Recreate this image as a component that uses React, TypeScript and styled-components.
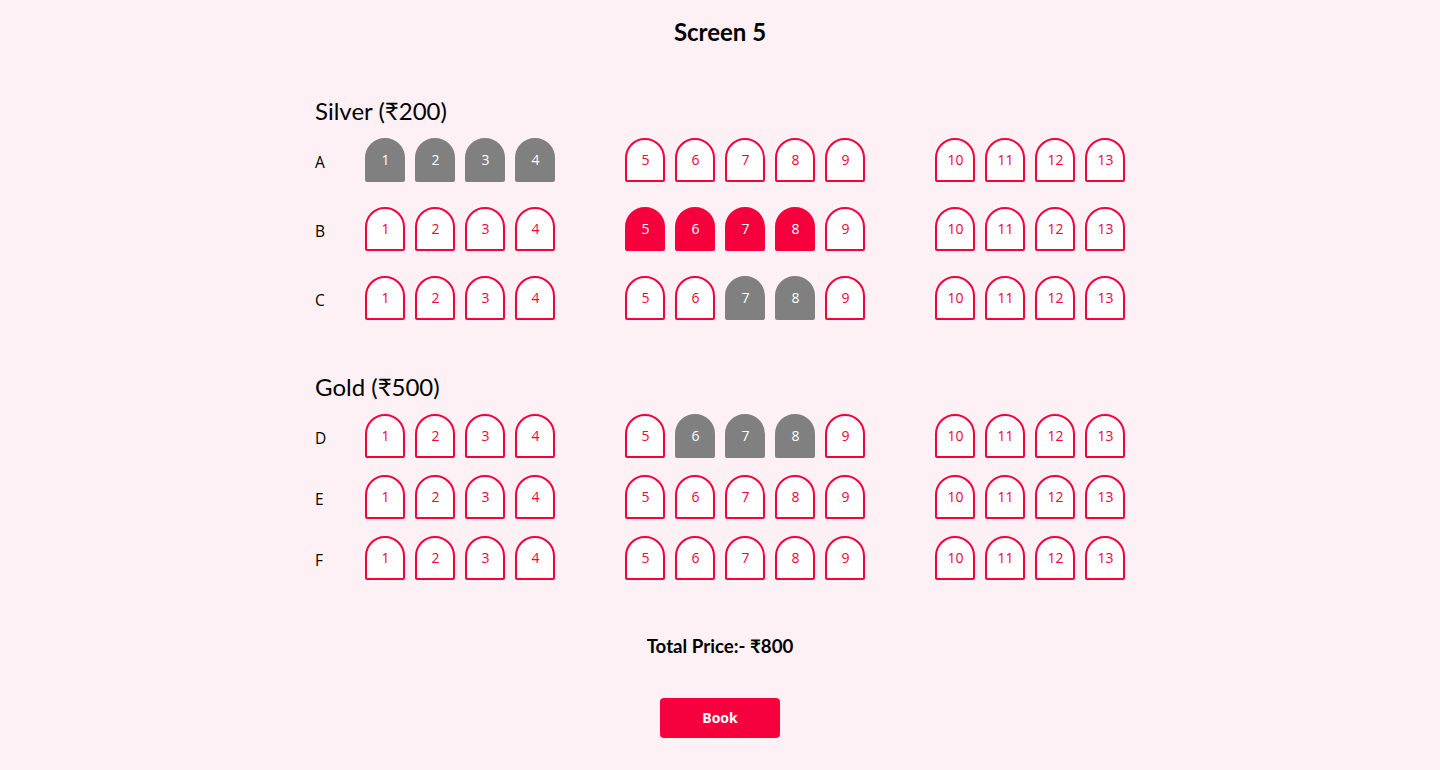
import React from "react";
import styled, { createGlobalStyle } from "styled-components";

const Global = createGlobalStyle`
  html, body { margin: 0; padding: 0; background: #fdf1f5; }
  body { font-family: "Open Sans", "Noto Sans", sans-serif; color: #000; }
`;

const RED = "#f5003c";
const GREY = "#808080";

const Page = styled.div`
  min-height: 100vh;
  background: #fdf1f5;
  display: flex;
  flex-direction: column;
  align-items: center;
  padding-top: 17px;
  box-sizing: border-box;
`;

const Title = styled.h1`
  margin: 0;
  font-family: Lato, "Open Sans", sans-serif;
  font-weight: 700;
  font-size: 24px;
  line-height: 29px;
`;

const Layout = styled.div`
  width: 810px;
  display: flex;
  flex-direction: column;
`;

const Section = styled.section<{ $top: number; $rowGap: number }>`
  margin-top: ${(p) => p.$top}px;
  display: flex;
  flex-direction: column;
  gap: ${(p) => p.$rowGap}px;
`;

const SectionTitle = styled.h2<{ $rowGap: number }>`
  margin: 0 0 ${(p) => 14 - p.$rowGap}px 0;
  font-family: Lato, "Open Sans", sans-serif;
  font-weight: 400;
  font-size: 24px;
  line-height: 26px;
`;

const Row = styled.div`
  display: flex;
  align-items: center;
  gap: 70px;
`;

const RowLabel = styled.div`
  width: 50px;
  margin-right: -70px;
  font-size: 15.5px;
  padding-top: 3px;
`;

const Group = styled.div`
  display: flex;
  gap: 10px;
`;

type SeatState = "free" | "selected" | "booked";

const Seat = styled.button<{ $state: SeatState }>`
  width: 40px;
  height: 44px;
  box-sizing: border-box;
  padding: 0 0 2px 1px;
  border-radius: 20px 20px 2px 2px;
  border: 2px solid ${(p) => (p.$state === "booked" ? GREY : RED)};
  background: ${(p) =>
    p.$state === "booked" ? GREY : p.$state === "selected" ? RED : "#fff"};
  color: ${(p) => (p.$state === "free" ? RED : "#fff")};
  font-family: "Open Sans", "Noto Sans", sans-serif;
  font-size: 14px;
  display: flex;
  align-items: center;
  justify-content: center;
  cursor: pointer;
`;

const Total = styled.div`
  margin-top: 55px;
  font-family: Lato, "Open Sans", sans-serif;
  font-weight: 700;
  font-size: 18.7px;
  line-height: 22px;
`;

const BookButton = styled.button`
  margin-top: 41px;
  width: 120px;
  height: 40px;
  border: none;
  border-radius: 4px;
  background: ${RED};
  color: #fff;
  font-family: "Open Sans", sans-serif;
  font-weight: 700;
  font-size: 14px;
  padding: 0 0 2px;
  cursor: pointer;
`;

const groups = [
  [1, 2, 3, 4],
  [5, 6, 7, 8, 9],
  [10, 11, 12, 13],
];

const sections = [
  {
    name: "Silver (₹200)",
    top: 52,
    gap: 25,
    rows: [
      { label: "A", booked: [1, 2, 3, 4], selected: [] as number[] },
      { label: "B", booked: [] as number[], selected: [5, 6, 7, 8] },
      { label: "C", booked: [7, 8], selected: [] as number[] },
    ],
  },
  {
    name: "Gold (₹500)",
    top: 54,
    gap: 17,
    rows: [
      { label: "D", booked: [6, 7, 8], selected: [] as number[] },
      { label: "E", booked: [] as number[], selected: [] as number[] },
      { label: "F", booked: [] as number[], selected: [] as number[] },
    ],
  },
];

export default function App() {
  return (
    <Page>
      <Global />
      <Title>Screen 5</Title>
      <Layout>
        {sections.map((s) => (
          <Section key={s.name} $top={s.top} $rowGap={s.gap}>
            <SectionTitle $rowGap={s.gap}>{s.name}</SectionTitle>
            {s.rows.map((r) => (
              <Row key={r.label}>
                <RowLabel>{r.label}</RowLabel>
                {groups.map((g, i) => (
                  <Group key={i}>
                    {g.map((n) => {
                      const st: SeatState = r.booked.includes(n)
                        ? "booked"
                        : r.selected.includes(n)
                        ? "selected"
                        : "free";
                      return (
                        <Seat key={n} $state={st}>
                          {n}
                        </Seat>
                      );
                    })}
                  </Group>
                ))}
              </Row>
            ))}
          </Section>
        ))}
      </Layout>
      <Total>Total Price:- ₹800</Total>
      <BookButton>Book</BookButton>
    </Page>
  );
}
